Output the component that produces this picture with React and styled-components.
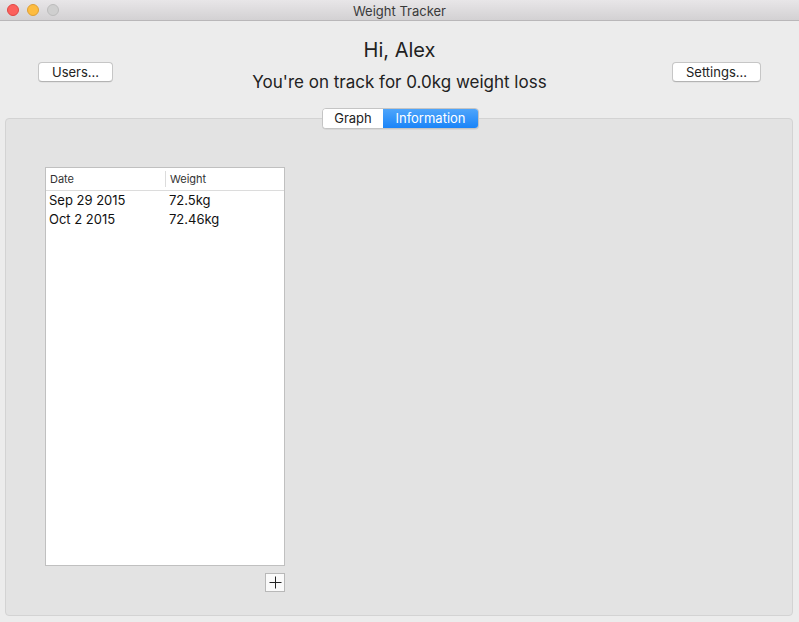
import React from 'react'
import styled, { createGlobalStyle } from 'styled-components'

const Global = createGlobalStyle`
    html, body {
        margin: 0;
        padding: 0;
        background: #ececec;
    }
    body {
        font-family: "Inter", "Liberation Sans", sans-serif;
        color: #222;
    }
`

const Window = styled.div`
    width: 799px;
    height: 622px;
    display: flex;
    flex-direction: column;
    background: #ececec;
    overflow: hidden;
`

const TitleBar = styled.div`
    height: 21px;
    box-sizing: border-box;
    display: flex;
    align-items: center;
    position: relative;
    background: linear-gradient(#e8e6e8, #d3d1d3);
    border-bottom: 1px solid #b9b7b9;

    .title {
        flex: 1;
        text-align: center;
        font-size: 13px;
        color: #3a3a3a;
        margin-top: 1px;
    }
`

const Lights = styled.div`
    position: absolute;
    left: 7px;
    top: 4px;
    display: flex;
    gap: 8px;
`

const Light = styled.span`
    width: 12px;
    height: 12px;
    box-sizing: border-box;
    border-radius: 50%;
    background: ${p => p.$color};
    border: 1px solid ${p => p.$edge};
`

const Header = styled.div`
    display: grid;
    grid-template-columns: 1fr auto 1fr;
    align-items: start;
    padding: 17px 38px 0 38px;
    height: 70px;
    box-sizing: border-box;

    .right {
        justify-self: end;
        margin-top: 24px;
    }
    .left {
        justify-self: start;
        margin-top: 24px;
    }
`

const Greeting = styled.div`
    text-align: center;

    h1 {
        margin: 0;
        font-weight: 400;
        font-size: 20px;
        line-height: 24px;
        color: #222;
    }
    p {
        margin: 10px 0 0;
        font-size: 17px;
        line-height: 20px;
        color: #222;
    }
`

const PushButton = styled.button`
    font-family: inherit;
    font-size: 13px;
    color: #222;
    height: 20px;
    padding: 0 13px;
    background: #fff;
    border: 1px solid #c6c6c6;
    border-bottom-color: #b3b3b3;
    border-radius: 4px;
    box-shadow: 0 0.5px 0.5px rgba(0, 0, 0, 0.08);
    line-height: 18px;
`

const TabBox = styled.div`
    margin: 27px 6px 6px 5px;
    flex: 1;
    position: relative;
    background: #e3e3e3;
    border: 1px solid #d3d3d3;
    border-radius: 4px;
    padding: 48px 0 0 39px;
    box-sizing: border-box;
`

const Segmented = styled.div`
    position: absolute;
    top: -11px;
    left: 316px;
    display: flex;
    height: 21px;
    box-sizing: border-box;
    border: 1px solid #c4c4c4;
    border-radius: 4px;
    overflow: hidden;
    background: #fff;
    box-shadow: 0 0.5px 0.5px rgba(0, 0, 0, 0.1);
`

const Segment = styled.div`
    font-size: 13px;
    line-height: 19px;
    width: ${p => p.$width}px;
    text-align: center;
    color: ${p => (p.$active ? '#fff' : '#222')};
    background: ${p => (p.$active ? 'linear-gradient(#4ea5fb, #1a84f8)' : '#fff')};
`

const Table = styled.div`
    width: 240px;
    height: 399px;
    box-sizing: border-box;
    background: #fff;
    border: 1px solid #c0c0c0;
`

const HeadRow = styled.div`
    display: grid;
    grid-template-columns: 119px 1fr;
    height: 22px;
    border-bottom: 1px solid #dcdcdc;
    font-size: 11px;
    color: #333;
    align-items: center;

    span {
        padding-left: 4px;
        height: 16px;
        line-height: 16px;
    }
    span + span {
        border-left: 1px solid #dcdcdc;
    }
`

const Row = styled.div`
    display: grid;
    grid-template-columns: 119px 1fr;
    height: 19px;
    font-size: 13px;
    line-height: 19px;
    color: #111;

    span {
        padding-left: 3px;
    }
    span + span {
        padding-left: 4px;
    }
    &:first-of-type {
        margin-top: 1px;
    }
`

const PlusButton = styled.button`
    margin: 7px 0 0 220px;
    width: 20px;
    height: 19px;
    padding: 0;
    display: flex;
    align-items: center;
    justify-content: center;
    background: #fafafa;
    border: 1px solid #b8b8b8;
    box-sizing: border-box;
`

const entries = [
    { date: 'Sep 29 2015', weight: '72.5kg' },
    { date: 'Oct 2 2015', weight: '72.46kg' },
]

function App() {
    return (
        <Window>
            <Global />
            <TitleBar>
                <Lights>
                    <Light $color="#fc605c" $edge="#df4744" />
                    <Light $color="#fdbc40" $edge="#de9f34" />
                    <Light $color="#cfcfcf" $edge="#bcbcbc" />
                </Lights>
                <span className="title">Weight Tracker</span>
            </TitleBar>
            <Header>
                <PushButton className="left">Users...</PushButton>
                <Greeting>
                    <h1>Hi, Alex</h1>
                    <p>You're on track for 0.0kg weight loss</p>
                </Greeting>
                <PushButton className="right">Settings...</PushButton>
            </Header>
            <TabBox>
                <Segmented>
                    <Segment $width={60}>Graph</Segment>
                    <Segment $width={95} $active>Information</Segment>
                </Segmented>
                <Table>
                    <HeadRow>
                        <span>Date</span>
                        <span>Weight</span>
                    </HeadRow>
                    {entries.map(e => (
                        <Row key={e.date}>
                            <span>{e.date}</span>
                            <span>{e.weight}</span>
                        </Row>
                    ))}
                </Table>
                <PlusButton>
                    <svg width="13" height="13" viewBox="0 0 13 13">
                        <path d="M6.5 0.5v12M0.5 6.5h12" stroke="#222" strokeWidth="1" />
                    </svg>
                </PlusButton>
            </TabBox>
        </Window>
    )
}

export default App
